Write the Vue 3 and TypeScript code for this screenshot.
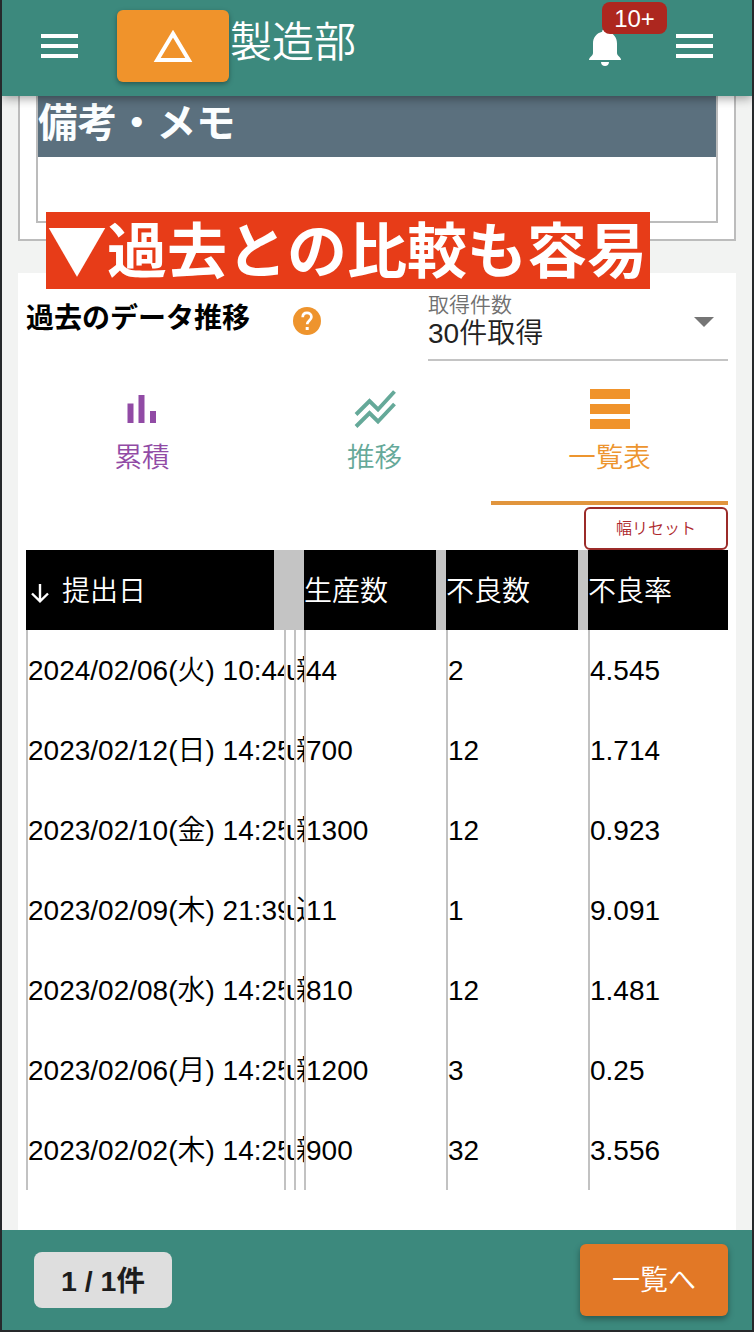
<script setup lang="ts">
interface DataRow {
  date: string
  user: string
  kind: string
  made: string
  bad: string
  rate: string
}

const rows: DataRow[] = [
  { date: '2024/02/06(火) 10:44', user: 'u', kind: '新', made: '44', bad: '2', rate: '4.545' },
  { date: '2023/02/12(日) 14:25', user: 'u', kind: '新', made: '700', bad: '12', rate: '1.714' },
  { date: '2023/02/10(金) 14:25', user: 'u', kind: '新', made: '1300', bad: '12', rate: '0.923' },
  { date: '2023/02/09(木) 21:39', user: 'u', kind: '追', made: '11', bad: '1', rate: '9.091' },
  { date: '2023/02/08(水) 14:25', user: 'u', kind: '新', made: '810', bad: '12', rate: '1.481' },
  { date: '2023/02/06(月) 14:25', user: 'u', kind: '新', made: '1200', bad: '3', rate: '0.25' },
  { date: '2023/02/02(木) 14:25', user: 'u', kind: '新', made: '900', bad: '32', rate: '3.556' },
]
</script>

<template>
  <div class="app">
    <header class="top">
      <button class="burger"><i /><i /><i /></button>
      <button class="tri">
        <svg width="42" height="36" viewBox="0 0 42 36"><path d="M21 5.600 L36.800 32 H5.200 Z" fill="none" stroke="#fff" stroke-width="4" /></svg>
      </button>
      <h1>製造部</h1>
      <div class="bell">
        <svg width="34" height="40" viewBox="0 0 34 40">
          <path d="M17 1c-1.800 0-2.700 1-2.900 2.700C8.500 5 5 9.500 5 15.500V25c0 3-4 4-4 7h32c0-3-4-4-4-7v-9.500C29 9.500 25.500 5 19.900 3.700 19.700 2 18.800 1 17 1z" fill="#fff" />
          <path d="M13 34h8c0 2.500-1.700 4-4 4s-4-1.500-4-4z" fill="#fff" />
        </svg>
        <span class="badge">10+</span>
      </div>
      <button class="burger"><i /><i /><i /></button>
    </header>

    <main>
      <section class="memo">
        <div class="memo-box"><h2>備考・メモ</h2></div>
        <p class="banner">▼過去との比較も容易</p>
      </section>

      <section class="history">
        <div class="filter">
          <h3>過去のデータ推移</h3>
          <svg class="help" width="28" height="28" viewBox="0 0 28 28">
            <circle cx="14" cy="14" r="14" fill="#ee942d" />
            <path d="M9.700 10.200C9.700 7.500 11.500 5.900 14 5.900s4.400 1.600 4.400 4c0 3.600-4.200 3.500-4.200 7.400" fill="none" stroke="#fff" stroke-width="2.700" />
            <rect x="12.700" y="20" width="3" height="3" fill="#fff" />
          </svg>
          <div class="select">
            <div>
              <label>取得件数</label>
              <span>30件取得</span>
            </div>
            <svg width="20" height="10" viewBox="0 0 20 10"><path d="M0 0H20L10 10Z" fill="#757575" /></svg>
          </div>
        </div>

        <nav class="tabs">
          <a class="purple">
            <svg width="44" height="44" viewBox="0 0 44 44"><path d="M7.500 17.500h6V37h-6zM18.500 9h6V37h-6zM30 25h6V37h-6z" fill="#914ba5" /></svg>
            累積
          </a>
          <a class="green">
            <svg width="44" height="44" viewBox="0 0 44 44" fill="none" stroke="#65a999" stroke-width="3.900">
              <path d="M3 28.500L16.500 15 25 23.500 41.500 5.500" />
              <path d="M3 40.500L16.500 27 25 35.500 41.500 18" />
            </svg>
            推移
          </a>
          <a class="orange active">
            <svg width="44" height="44" viewBox="0 0 44 44"><path d="M2 3h40v10H2zM2 18h40v10H2zM2 33h40v10H2z" fill="#f0932b" /></svg>
            一覧表
          </a>
        </nav>

        <div class="tools"><button>幅リセット</button></div>

        <div class="grid head">
          <div class="grip sort">
            <svg width="20" height="20" viewBox="0 0 20 20"><path d="M10 1V18M2 10.500L10 18.300 18 10.500" fill="none" stroke="#fff" stroke-width="2.400" /></svg>
            提出日
          </div>
          <div class="grip" />
          <div class="grip" />
          <div class="grip">生産数</div>
          <div class="grip">不良数</div>
          <div>不良率</div>
        </div>
        <div v-for="row in rows" :key="row.date" class="grid row">
          <div>{{ row.date }}</div>
          <div>{{ row.user }}</div>
          <div>{{ row.kind }}</div>
          <div>{{ row.made }}</div>
          <div>{{ row.bad }}</div>
          <div>{{ row.rate }}</div>
        </div>
      </section>
    </main>

    <footer>
      <span class="count">1 / 1件</span>
      <button class="list">一覧へ</button>
    </footer>
  </div>
</template>

<style>
body {
  background: #26292b;
}
</style>

<style scoped>
* {
  box-sizing: border-box;
  margin: 0;
  padding: 0;
}
.app {
  width: 754px;
  height: 1332px;
  border: solid #26292b;
  border-width: 0 2px 2px;
  display: flex;
  flex-direction: column;
  overflow: hidden;
  background: #f2f3f2;
  font-family: "Liberation Sans", "Noto Sans CJK JP", sans-serif;
  font-weight: 350;
  font-size: 28px;
  font-kerning: none;
  color: #000;
}
button {
  border: 0;
  background: none;
  font: inherit;
}
svg {
  display: block;
  flex: none;
}
.top {
  position: relative;
  z-index: 1;
  flex: none;
  height: 96px;
  display: flex;
  align-items: flex-start;
  padding: 0 39px;
  background: #3c897d;
  box-shadow: 0 2px 10px rgba(0, 0, 0, 0.4);
}
.burger {
  width: 37px;
  margin-top: 34px;
  display: grid;
  gap: 6px;
}
.burger i {
  height: 4px;
  background: #fff;
}
.tri {
  width: 112px;
  height: 72px;
  margin: 10px 1px 0 39px;
  border-radius: 6px;
  background: #f0932b;
  box-shadow: 0 2px 5px rgba(0, 0, 0, 0.35);
  display: flex;
  align-items: center;
  justify-content: center;
}
h1 {
  flex: 1;
  font-size: 42px;
  font-weight: 350;
  line-height: 86px;
  color: #fff;
}
.bell {
  position: relative;
  margin: 28px 54px 0 0;
}
.badge {
  position: absolute;
  left: 14px;
  top: -26px;
  width: 65px;
  height: 32px;
  border-radius: 8px;
  background: #ad271f;
  color: #fff;
  font-size: 24px;
  line-height: 34px;
  text-align: center;
}
main {
  flex: 1;
  min-height: 0;
  padding: 0 16px;
  display: flex;
  flex-direction: column;
}
.memo {
  position: relative;
  height: 145px;
  margin-bottom: 32px;
  padding: 0 16px 16px;
  border: solid #bcbcbc;
  border-width: 0 2px 2px;
  background: #fff;
}
.memo-box {
  height: 127px;
  border: solid #bcbcbc;
  border-width: 0 2px 2px;
}
h2 {
  height: 61px;
  background: #5b707e;
  color: #fbfeff;
  font-size: 39.500px;
  font-weight: 700;
  line-height: 55px;
}
.banner {
  position: absolute;
  left: 26px;
  top: 116px;
  width: 604px;
  height: 77px;
  padding-left: 1px;
  background: #e73c18;
  color: #fff;
  font-family: "Noto Sans CJK JP", sans-serif;
  font-size: 60px;
  font-weight: 700;
  line-height: 69px;
  white-space: nowrap;
}
.history {
  flex: 1;
  padding: 0 8px;
  background: #fff;
}
.filter {
  height: 88px;
  display: flex;
}
h3 {
  width: 267px;
  font-size: 28px;
  font-weight: 700;
  line-height: 92px;
}
.help {
  margin-top: 34px;
}
.select {
  width: 300px;
  margin-left: auto;
  padding: 21px 14px 0 0;
  border-bottom: 2px solid #c4c4c4;
  display: flex;
  justify-content: space-between;
}
.select label {
  display: block;
  font-size: 21px;
  line-height: 22px;
  color: #707070;
}
.select span {
  display: block;
  font-size: 28px;
  line-height: 36px;
  color: #222;
}
.select svg {
  margin-top: 23px;
}
.tabs {
  height: 144px;
  display: grid;
  grid-template-columns: 232px 233px 237px;
}
.tabs a {
  display: flex;
  flex-direction: column;
  align-items: center;
  padding-top: 25px;
  font-size: 27.500px;
  line-height: 56px;
}
.purple {
  color: #914ba5;
}
.green {
  color: #65a999;
}
.orange {
  color: #ed952f;
}
.active {
  border-bottom: 4px solid #e1953d;
}
.tools {
  height: 45px;
  padding-top: 2px;
  display: flex;
  justify-content: flex-end;
}
.tools button {
  width: 144px;
  height: 43px;
  padding-bottom: 3px;
  border: 2px solid #9b2b29;
  border-radius: 6px;
  color: #ad272c;
  font-size: 16px;
}
.grid {
  height: 80px;
  display: grid;
  grid-template-columns: 258px 10px 10px 142px 142px 140px;
  line-height: 82px;
}
.grid > div {
  min-width: 0;
  height: 80px;
  overflow: hidden;
  white-space: nowrap;
}
.head {
  background: #000;
  color: #fff;
  line-height: 84px;
}
.grip {
  border-right: 10px solid #c4c4c4;
}
.sort {
  display: flex;
  align-items: flex-start;
  gap: 12px;
  padding-left: 4px;
}
.sort svg {
  margin-top: 33px;
}
.row > div {
  border-left: 2px solid #c2c2c2;
}
footer {
  flex: none;
  height: 100px;
  padding: 0 24px 0 32px;
  display: flex;
  align-items: center;
  justify-content: space-between;
  background: #3c897d;
}
.count {
  width: 138px;
  height: 56px;
  border-radius: 8px;
  background: #dedede;
  color: #1c1c1c;
  font-size: 28.500px;
  font-weight: 700;
  line-height: 58px;
  text-align: center;
}
.list {
  width: 148px;
  height: 72px;
  padding-bottom: 4px;
  border-radius: 6px;
  background: #e27826;
  color: #fff;
  box-shadow: 0 3px 6px rgba(0, 0, 0, 0.35);
}
</style>
